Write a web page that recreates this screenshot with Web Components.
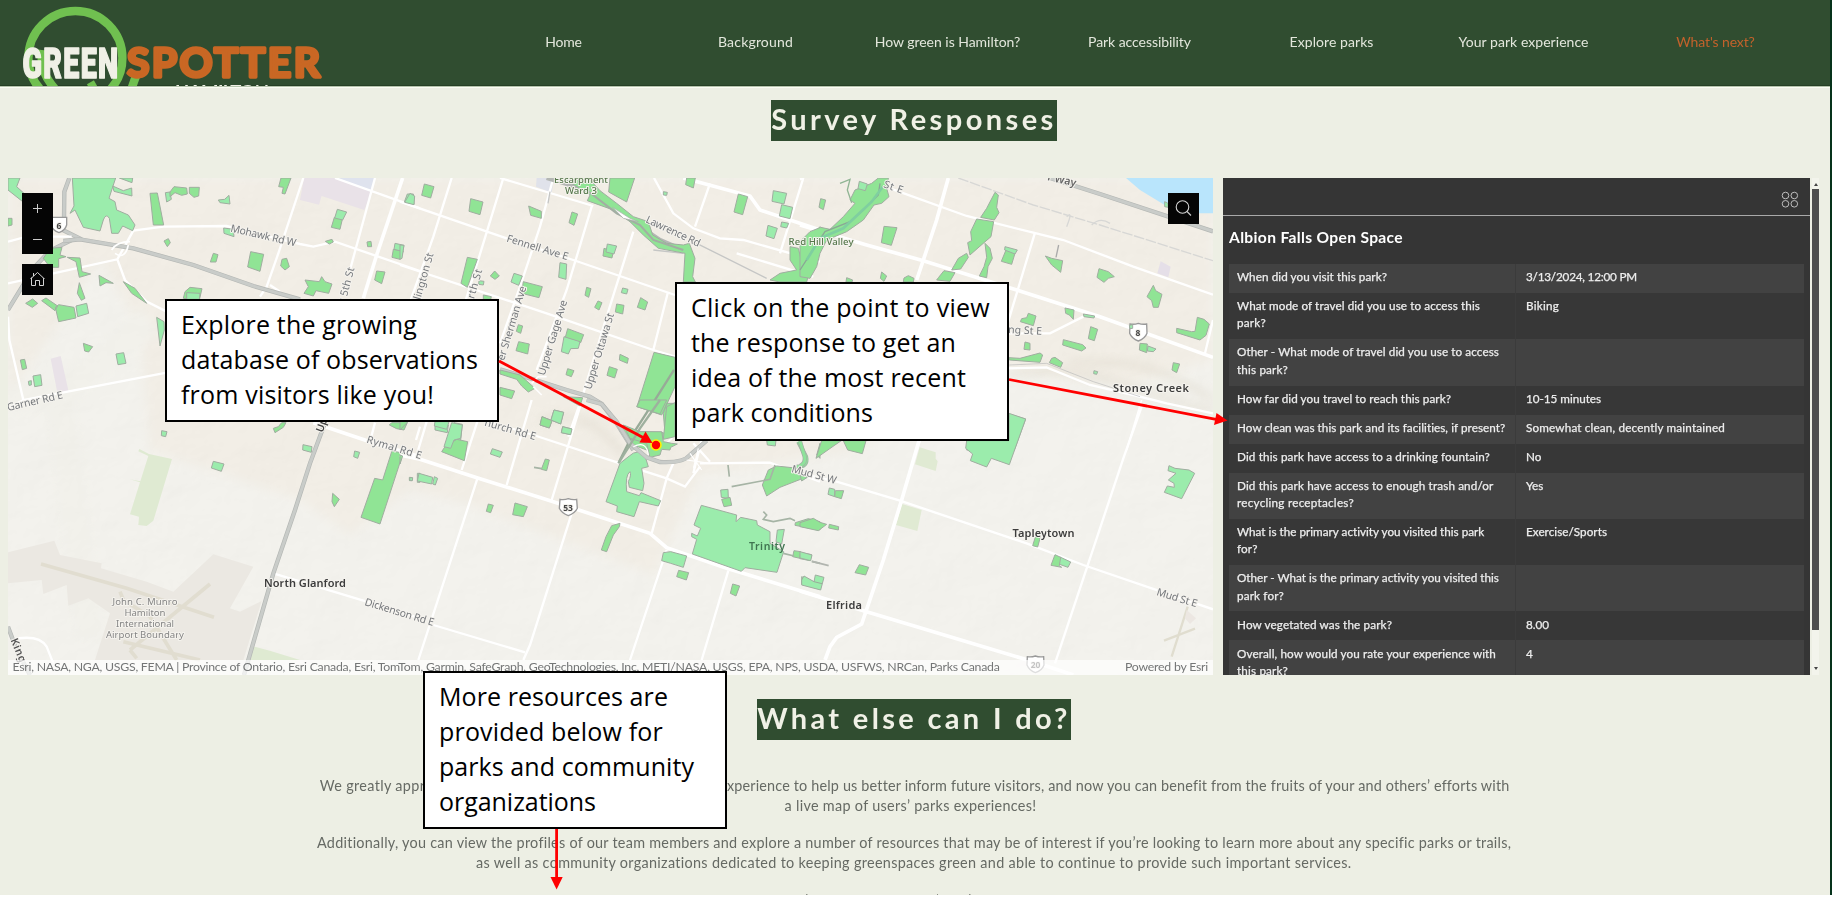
<!DOCTYPE html>
<html lang="en">
<head>
<meta charset="utf-8">
<title>Green Spotter Hamilton</title>
<style>
html,body{margin:0;padding:0;background:#fff;overflow:hidden}
body{font-family:Lato,"Open Sans",sans-serif;color:#666a64}
.dash{display:grid;grid-template-columns:1205px 597px 11px;padding:37px 0 0 8px}
.dash park-details{margin-left:10px;width:587px}
.copy{display:flex;flex-direction:column;align-items:center;width:1194px;margin:36px auto 0 317px;font-size:14.4px;line-height:20.2px}
.copy .split{display:flex;justify-content:space-between;width:1188.5px}
.copy .gap{height:17px}
</style>
</head>
<body>
<app-page>
  <site-header></site-header>
  <section-title style="padding-top:14px"><fit-text w="285.5">Survey Responses</fit-text></section-title>
  <div class="dash">
    <park-map></park-map>
    <park-details></park-details>
    <scroll-rail></scroll-rail>
  </div>
  <section-title style="padding-top:23.5px"><fit-text w="313.5">What else can I do?</fit-text></section-title>
  <div class="copy">
    <div class="split"><fit-text w="145">We greatly appreciate</fit-text><fit-text w="228">you taking the time to share your</fit-text><fit-text w="789">experience to help us better inform future visitors, and now you can benefit from the fruits of your and others’ efforts with</fit-text></div>
    <fit-text w="252" style="margin-right:7px">a live map of users’ parks experiences!</fit-text>
    <div class="gap"></div>
    <fit-text w="1194">Additionally, you can view the profiles of our team members and explore a number of resources that may be of interest if you’re looking to learn more about any specific parks or trails,</fit-text>
    <fit-text w="876">as well as community organizations dedicated to keeping greenspaces green and able to continue to provide such important services.</fit-text>
  </div>
  <note-box slot="over" style="left:165px;top:299px;width:334px;height:123px">
    <fit-text w="236">Explore the growing</fit-text><fit-text w="297">database of observations</fit-text><fit-text w="253">from visitors like you!</fit-text>
  </note-box>
  <note-box slot="over" style="left:675px;top:282px;width:334px;height:159px">
    <fit-text w="299">Click on the point to view</fit-text><fit-text w="265">the response to get an</fit-text><fit-text w="275">idea of the most recent</fit-text><fit-text w="182">park conditions</fit-text>
  </note-box>
  <note-box slot="over" style="left:423px;top:670.5px;width:304px;height:158.5px">
    <fit-text w="229">More resources are</fit-text><fit-text w="224">provided below for</fit-text><fit-text w="255">parks and community</fit-text><fit-text w="157">organizations</fit-text>
  </note-box>
  <note-arrows slot="over"></note-arrows>
</app-page>

<script>
const define = (name, html, init) => customElements.define(name, class extends HTMLElement {
  constructor(){ super(); this.attachShadow({mode:'open'}).innerHTML = html; }
  connectedCallback(){ if (init) init(this); }
});

define('app-page', `<style>
:host{display:block;position:relative;box-sizing:border-box;width:1832px;height:895px;overflow:hidden;background:#edefe4;border-right:2px solid #06331b}
</style><slot></slot><slot name="over"></slot>`);

define('section-title', `<style>
:host{display:flex;justify-content:center;width:1828px;box-sizing:content-box}
h2{margin:0;background:#304d30;color:#f0f1e6;font:bold 29px/37px Lato,sans-serif;height:41px}
</style><h2><slot></slot></h2>`);

define('site-header', `<style>
:host{display:flex;height:87px;margin-bottom:-1px;background:#304d30;overflow:hidden;border-bottom:1px solid #b5c4ac;box-shadow:0 1px 0 #fbfcf4,inset 0 -1px #263f25;box-sizing:border-box}
svg{flex:0 0 468px;height:86px}
nav{display:grid;grid-template-columns:repeat(7,192px);height:86px}
nav a{display:flex;justify-content:center;padding:32px 1px 0 0;font-size:14px;line-height:20px;color:#e3e7dc}
nav a.on{color:#c3622b}
</style>
<svg width="468" height="86" viewBox="0 0 468 86">
  <g fill="none" stroke="#70c050" stroke-width="8.4">
    <circle cx="75.4" cy="58" r="47"/>
    <path d="M42 50C40 68 46 79 56 90"/><path d="M136 76L131 90"/><path d="M89 88L96 84"/>
  </g>
  <text x="22.5" y="77.6" textLength="97" lengthAdjust="spacingAndGlyphs" font-family="Roboto,sans-serif" font-weight="900" font-size="42" letter-spacing="2" fill="#f0f0e6" stroke="#f0f0e6" stroke-width="1.6" stroke-linejoin="round">GREEN</text>
  <text x="127" y="77.3" textLength="193" lengthAdjust="spacing" font-family="Lato,sans-serif" font-weight="700" font-size="41" fill="#c96724" stroke="#c96724" stroke-width="3.4" stroke-linejoin="round">SPOTTER</text>
  <text x="175" y="98.5" textLength="94" font-family="Lato,sans-serif" font-weight="700" font-size="18.5" fill="#f0f0e6">HAMILTON</text>
</svg>
<nav><a><fit-text w="36.5">Home</fit-text></a><a><fit-text w="75">Background</fit-text></a><a><fit-text w="145.5">How green is Hamilton?</fit-text></a><a><fit-text w="103">Park accessibility</fit-text></a><a><fit-text w="84">Explore parks</fit-text></a><a><fit-text w="130">Your park experience</fit-text></a><a class="on"><fit-text w="78.5">What's next?</fit-text></a></nav>`);

define('scroll-rail', `<style>
:host{display:flex;flex-direction:column;align-items:center;width:7px;height:497px;margin-left:2px;background:#f3f4ec}
.u,.d{border:2.5px solid transparent}
.u{border-bottom:3px solid #444;border-top:0;margin:5px 0 3px}
.t{width:7px;height:441px;background:#4e4e4e}
.d{border-top:3px solid #444;border-bottom:0;margin-top:37px}
</style><div class="u"></div><div class="t"></div><div class="d"></div>`);

const ROWS = [
  [[['When did you visit this park?',150]],['3/13/2024, 12:00 PM',111]],
  [[['What mode of travel did you use to access this',243],['park?',29]],['Biking',33]],
  [[['Other - What mode of travel did you use to access',262],['this park?',51]],null],
  [[['How far did you travel to reach this park?',214]],['10-15 minutes',75]],
  [[['How clean was this park and its facilities, if present?',268.5]],['Somewhat clean, decently maintained',199]],
  [[['Did this park have access to a drinking fountain?',253]],['No',15.5]],
  [[['Did this park have access to enough trash and/or',256.5],['recycling receptacles?',117]],['Yes',17.5]],
  [[['What is the primary activity you visited this park',247.5],['for?',20.5]],['Exercise/Sports',81]],
  [[['Other - What is the primary activity you visited this',262],['park for?',47]],null],
  [[['How vegetated was the park?',155]],['8.00',23]],
  [[['Overall, how would you rate your experience with',259],['this park?',51]],['4',7]],
];
const fit = ([t,w]) => `<fit-text w="${w}">${t}</fit-text>`;

define('park-details', `<style>
:host{display:block;height:497px;background:#353535;overflow:hidden;color:#eee}
header{height:38px;box-sizing:border-box;border-bottom:1px solid #a9a9a9;display:flex;justify-content:flex-end;align-items:flex-start;padding:13px 11px 0 0}
h3{margin:0 0 0 6px;padding-top:10px;height:38px;font:bold 15.6px/22px Lato,sans-serif;color:#fff}
.table{margin:0 6.5px 0 6px;font-size:11.7px;line-height:17.3px;-webkit-text-stroke:.25px #eee}
.row{display:grid;grid-template-columns:286px 1fr;background:#373737}
.row:nth-child(odd){background:#424242}
.row>div{padding:4.2px 8px 7.5px}
.row>div+div{padding-left:10px;border-left:1px solid #3b3b3b}
fit-text{display:block}
</style>
<header><svg width="18" height="18" viewBox="0 0 18 18" fill="none" stroke="#bdbdbd" stroke-width="1"><circle cx="4.5" cy="4.5" r="3.3"/><circle cx="13.3" cy="4.5" r="3.3"/><circle cx="4.5" cy="12.8" r="3.3"/><circle cx="13.3" cy="12.8" r="3.3"/></svg></header>
<h3><fit-text w="174">Albion Falls Open Space</fit-text></h3>
<div class="table">${ROWS.map(([q,a]) => `<div class="row"><div>${q.map(fit).join('')}</div><div>${a?fit(a):''}</div></div>`).join('')}</div>`);

define('note-box', `<style>
:host{position:absolute;box-sizing:border-box;display:flex;flex-direction:column;border:2px solid #000;background:#fff;color:#000;font:25px/35px "Open Sans",sans-serif;padding:6px 0 0 14px;z-index:2}
</style><slot></slot>`);

define('note-arrows', `<style>:host{position:absolute;inset:0;z-index:3;pointer-events:none}svg{display:block}</style>
<svg width="1830" height="895" viewBox="0 0 1830 895" fill="red" stroke="none">
<circle cx="656" cy="445" r="5" stroke="#fff200" stroke-width="1.6"/>
<g stroke="red" stroke-width="2.8"><path d="M499 361L643 437.5"/><path d="M1009 379.5L1216 419.3"/><path d="M556.6 829V879"/></g>
<path d="M652.5 443L639.5 442.5L645.5 431.5Z"/><path d="M1227.5 420.5L1214 425L1216.5 413Z"/><path d="M556.6 889.5L550.5 877H562.7Z"/>
<path d="M806 894.5h1.5M937 894.5h1M969 894.5h1.5" stroke="#8b8f86"/>
</svg>`);

/* Six map tiles; tile geometry is in thirds of a pixel. */
define('park-map', `<style>
:host{display:block;position:relative;width:1205px;height:497px;overflow:hidden}
svg{display:block}
.bar{position:absolute;left:0;right:0;bottom:0;height:15px;background:rgba(255,255,255,.68);display:flex;justify-content:space-between;padding:0 5px 0 4.5px;font-size:12.3px;line-height:13.6px;color:#747676}
.btn{position:absolute;background:#050505;width:31px;color:#ccc}
.a{fill:#90e495}.b{fill:#9becac}.a,.b{stroke:#a0ada0;stroke-width:3}
.r{fill:none;stroke:#fff;stroke-width:7}.rw{stroke-width:11}.rn{stroke-width:5}
.hc{fill:none;stroke:#b4b7b4;stroke-width:13}.h{fill:none;stroke:#c9ccc9;stroke-width:9}
text{font-family:"Noto Sans",sans-serif;paint-order:stroke;stroke:#f5f3ee;stroke-width:2px;stroke-linejoin:round}
.st{font-size:10.5px;fill:#75787c}.pl{font-size:11px;font-weight:600;fill:#3d3d3d}.gr{font-size:9.6px;font-weight:500;fill:#55774b;stroke:none}.ap{font-size:9.6px;fill:#858585;text-anchor:middle}
</style>
<svg width="1205" height="497" viewBox="8 178 1205 497">
<defs><filter id="soft" x="-10%" y="-10%" width="120%" height="120%"><feGaussianBlur stdDeviation="5"/></filter>
<filter id="relief" x="0" y="0" width="100%" height="100%"><feTurbulence type="fractalNoise" baseFrequency=".018 .022" numOctaves="4" seed="8"/><feDiffuseLighting surfaceScale="5" lighting-color="#fff"><feDistantLight azimuth="225" elevation="60"/></feDiffuseLighting></filter></defs>
<rect x="8" y="178" width="1205" height="497" fill="#f3f2ed"/>
<path filter="url(#soft)" fill="#f2eee6" d="M8 178H1213V360L1130 385L1000 368L900 400L860 450L700 475L655 575L560 540L470 505L410 490L350 535L300 500L150 450L140 330L100 260L8 400Z"/>
<path d="M8 400L60 395L150 320M60 395L90 640" stroke="#f2f1eb" stroke-width="30" fill="none" filter="url(#soft)"/>
<rect x="8" y="178" width="1205" height="497" filter="url(#relief)" opacity=".07" style="mix-blend-mode:multiply"/>
<path d="M1213 400C1140 350 1090 365 1070 362M1010 375C1100 360 1150 400 1213 410M540 420C590 410 600 430 625 455" stroke="#dcd6c8" stroke-width="5" fill="none" opacity=".6" filter="url(#soft)"/>

<g transform="translate(0 170) scale(.33333)">
<path fill="#e9e2e8" d="M912 24H1040L1120 55L1093 120L965 78L957 104L900 90ZM152 566L182 558L206 665L172 668Z"/><path fill="#dfe3ee" d="M1005 24H1125L1115 66Z"/>
<path class="hc" d="M208 24L193 65L192 150L188 180L245 208M24 420L100 295L150 242L215 210"/><path class="h" d="M208 24L193 65L192 150L188 180L245 208M24 420L100 295L150 242L215 210"/>
<path class="r" d="M24 215L80 200H215M24 340L160 310L352 268L400 182L490 170L680 168L900 222L940 230L1005 215L1260 303M352 268L375 330L440 395L500 425M24 440L28 510L70 690M24 715L70 690L500 608"/>
<path class="r rw" d="M1208 24L1130 255L1090 385"/><path class="r" d="M910 24L835 250L800 350L780 380M1125 24L1050 300M1005 24L1260 115M810 345L840 365"/>
<path class="hc" d="M190 213L240 208L400 235L580 285L760 348L900 388"/><path class="h" d="M190 213L240 208L400 235L580 285L760 348L900 388"/>
<path class="rn r" d="M335 240Q350 215 390 215M345 250Q375 270 385 225"/>
<path class="b" d="M217 24H347L327 85L345 95L350 120L385 135L405 165L398 182L368 168L355 190H335L328 145Q318 128 310 150L300 183L250 172L225 120L210 130L222 108Z"/>
<path class="b" d="M24 24H60L50 50L72 70V98L24 60ZM338 48L370 62L395 54L396 78L342 64ZM358 24H398L396 38ZM496 68L510 66L514 88L500 96ZM655 90L674 88L687 76L690 102L660 98ZM671 174L700 178L702 200L672 190Z"/>
<path class="a" d="M510 66L522 50L560 54L562 72L545 76L525 68L510 80ZM568 52L598 52L596 78L582 82L568 70ZM450 70L472 69L491 165H460ZM843 24H873L855 72L846 70L850 52L836 50ZM24 145H36V165L24 168Z"/>
<path class="a" d="M150 235L186 232L180 255L198 260L176 266V292H150L130 265ZM202 262L240 264L246 305L272 312L238 322L228 275ZM492 213L505 206L511 218L502 230ZM640 250L654 254L648 276L631 276ZM752 245L791 253L780 304L743 291ZM846 268L860 265L868 290L855 300L842 288Z"/>
<path class="a" d="M238 338L255 385L244 391L232 370ZM370 335L405 355L440 400L395 370ZM297 316L340 340L318 338L300 348ZM77 400L98 387L113 400L97 412ZM125 392L138 384L173 408L165 422ZM166 412L176 404L222 412L228 444L176 455ZM550 385L555 365L570 352L606 356L598 390Z"/>
<path class="b" d="M228 408L260 400L266 430L233 440ZM560 368L600 370L598 388H560ZM348 552L371 548L378 580L354 584ZM99 618L122 614L126 646L104 650ZM85 634L94 632V645L87 646ZM470 442L492 455L493 480L480 528Z"/>
<path class="a" d="M250 520L278 530L266 546L254 543ZM61 570L74 568L80 595L67 599ZM915 330L958 335L965 320L975 335L996 342L986 370L948 362L940 378L912 370L925 350ZM1003 142L1027 148L1020 178L994 172ZM976 214L996 208L1000 216L988 222ZM1101 216L1113 214L1115 230L1103 230ZM1130 303L1155 306L1145 341L1124 330ZM1180 238L1210 243L1200 268L1176 262Z"/>
<path class="b" d="M1012 118L1040 126L1028 150L1004 144ZM1185 220L1212 226L1208 244L1182 238ZM1222 72L1240 72L1242 103L1213 96Z"/>
</g>

<g transform="translate(400 170) scale(.33333)">
<path fill="#e0e2ea" d="M410 24H462L455 68L408 50Z"/>
<path class="r" d="M0 95L320 205L520 270L825 375M0 285L440 430L760 540L825 560M155 24L100 200L0 480M310 24L210 350L150 540M460 24L420 170L360 350L300 520M575 110L500 360L410 600M700 185L620 440L550 670L505 800M803 370L760 540M300 24L580 108M762 24L820 130L880 175L960 205L1030 210L1260 275M930 40L885 170M1010 250L1240 320M1210 24L1140 250"/>
<path class="r rw" d="M850 24L1050 78L1080 120L1260 180"/>
<path class="hc" d="M440 24L560 60L640 110L720 170L780 210L850 240"/><path d="M890 220L1100 325M760 240L850 250M450 65L444 100" stroke="#c5c6c5" stroke-width="4" fill="none"/>
<path class="a" d="M490 24H565L600 62L650 100L700 140L745 155L758 195L800 220L850 225L868 220L885 265L878 320L886 336H850L855 250L775 235L730 195L690 155L640 120L562 92L570 75Z"/><path d="M560 60L650 130L720 165L760 210L850 240" stroke="#a3ada3" stroke-width="6" fill="none"/>
<path fill="#fff" stroke="#aaa" stroke-width="2" d="M638 112L690 145L715 155L670 145Z"/>
<path class="a" d="M630 24H704L680 96L626 66ZM73 42L102 50L92 84L65 76ZM212 86L249 96L240 134L207 124ZM386 108L424 124V145L392 136ZM516 126L533 132L522 166L507 158ZM860 24H886L880 54L857 44ZM1015 72L1043 80L1028 134L1002 126ZM612 235L640 244L636 264L609 258ZM202 262L232 268L202 352L183 340ZM284 303L298 318L285 328L271 318ZM370 335L427 350L417 383L365 370ZM560 352L573 356L566 382L555 376ZM594 393L606 398L597 420L584 412Z"/>
<path class="b" d="M30 70L44 78L42 104L14 97ZM622 222L650 228L642 252L618 246ZM342 310L367 318L356 346L333 336ZM480 278L500 282L498 328L476 322ZM1120 62L1160 70L1152 102L1116 94ZM1145 104L1178 112L1170 146L1138 138ZM1104 166L1132 175L1122 206L1098 198ZM1145 156L1166 160L1160 174L1142 170ZM0 225L12 226L6 265L0 268ZM668 354L684 358L680 372L664 368ZM237 332L252 334L250 345L236 343ZM790 65L802 67L800 76L790 75Z"/>
<path class="a" d="M650 402L672 406L668 432L646 426ZM722 383L743 396L735 420L712 412ZM355 464L368 468L362 490L349 484ZM356 515L388 522L383 552L348 542ZM503 476L551 494L542 518L496 502ZM503 596L522 602L514 620L498 614ZM628 590L652 598L644 624L621 616ZM762 547L825 562V650L785 735L711 710ZM250 375L274 380L272 388H250ZM660 553L685 565L682 580L658 570ZM300 652L344 663L335 686L300 675ZM490 680L548 683L540 708ZM426 740L456 752L448 774L420 765ZM800 700H825V800L795 790L790 730Z"/>
<path class="b" d="M492 500L540 515L535 535L512 536L505 552L484 545ZM462 720L491 727L482 762L453 750ZM488 770L516 777L512 794L484 788ZM105 760L145 765L142 788L105 780ZM162 758L187 763L182 810L190 840H135Z"/>
<path class="a" d="M660 765L720 785L790 788L785 830L760 840H740L700 825Z"/>
<path class="hc" d="M300 598L400 628L500 660L570 680L605 702L650 760L700 840"/><path class="h" d="M300 598L400 628L500 660L570 680L605 702L650 760L700 840"/>
<path class="a" d="M300 600L360 615L405 655L385 666L365 648L350 628L300 612Z"/>
<path d="M822 600L765 690L700 790L655 880" stroke="#98aa98" stroke-width="7" fill="none"/>
<path class="a" d="M1170 230L1195 235L1205 275L1235 250V200L1260 170V240L1235 280L1220 336H1140L1110 330L1140 310L1190 300L1170 270Z"/>
<path class="rn r" d="M395 640L415 620L440 620M400 650L425 675M780 840L830 790"/>
</g>

<g transform="translate(800 170) scale(.33333)">
<path fill="#b9e5fc" d="M978 24H1239V130H1170L1110 115L1020 60Z"/><path fill="#e5dfe8" d="M1082 274L1112 290L1105 322L1072 310Z"/>
<path class="r rw" d="M445 24L410 150L350 330M0 165L200 225L370 272L650 360L900 440L1239 562"/><path class="r" d="M0 28L10 24M270 55L500 138L700 188L790 210L1000 290L1239 374M705 188L620 470M850 440L750 490H620M1239 450L1215 550"/>
<path class="r" d="M620 595L740 592L870 645L1000 675L1100 700L1239 730"/><path d="M628 585L740 580L880 635L1020 680" stroke="#bbb" stroke-width="2" fill="none"/>
<path d="M475 24L700 105L900 165L1239 272" stroke="#d7d7d5" stroke-width="4" stroke-dasharray="32 5" fill="none"/><path d="M800 140Q820 120 800 170M875 165Q900 140 930 160" stroke="#d7d7d5" stroke-width="4" fill="none"/>
<path class="hc" d="M750 24L900 72L1239 184"/><path class="h" d="M750 24L900 72L1239 184"/>
<path class="a" d="M235 24H265L260 55L267 80L245 100L222 105L190 150L140 185L80 210L60 250L50 290L30 325L0 320V215L30 185L62 172L90 178L130 140L165 100L150 90L165 60L190 50L215 40Z"/>
<path d="M240 40L235 75L190 120L150 155L75 185L45 230L0 300" stroke="#8ba696" stroke-width="4" fill="none"/><path d="M248 50L215 95L130 175L60 205L20 270" stroke="#7fcfa0" stroke-width="8" fill="none"/><path d="M120 40L150 28L142 60L155 98" stroke="#91b594" stroke-width="4" fill="none"/>
<path class="b" d="M178 34L202 42L196 62L174 56Z"/>
<path class="a" d="M62 86L77 90L70 119L57 112ZM252 169L291 173L274 226L244 218ZM585 67L595 75L590 112L597 128L583 150L542 142L560 115ZM530 147L581 155L573 200L552 218L510 255L503 218L515 212L512 185ZM555 220L570 235L577 265L564 290L560 323L538 318L552 290L560 262ZM500 250L505 262L482 297L455 300L475 265ZM416 322L432 302L465 308L450 334L410 330ZM618 240L645 250L635 283L604 274ZM245 306L260 318L252 334L241 325ZM140 323L158 330L156 336H138ZM312 324L325 317L342 325L340 336H310Z"/>
<path class="a" d="M736 258L755 265L788 272L782 307L755 285ZM897 296L925 305L943 320L925 325L912 337L891 322ZM1060 346L1067 362L1086 373L1075 412H1060L1055 392L1041 380ZM1130 475L1175 485L1185 484L1192 442L1212 448L1228 462L1218 496L1200 510L1130 488ZM685 430L708 438L700 467L661 455L665 446L680 443ZM872 470L893 478L883 512L865 506ZM790 509L848 524L858 534L845 543L788 525ZM627 563L660 565L720 549L728 555L720 577L628 570ZM675 516L690 520V540L672 538ZM755 565L765 562L788 578L782 592L748 578ZM1020 520L1042 522L1040 548L1018 540ZM1120 578L1139 582L1130 608L1116 600ZM795 414L822 420L820 448L808 435L797 430Z"/>
<path class="b" d="M615 230L652 240L645 252L614 240ZM1044 528L1068 537L1060 545L1042 543ZM850 432L884 438L882 444L852 440ZM882 602L893 605L890 613L881 611ZM630 733L677 747L643 840H500L510 812H627ZM1094 95L1104 100V112L1094 110Z"/>
<path d="M776 225L768 262" stroke="#aaa" stroke-width="4"/>
<path class="r rn" d="M1025 690L980 840M360 813L352 840"/>
<path fill="#fff" stroke="#999" stroke-width="4" d="M990 462Q1003 464 1015 460Q1027 464 1040 462L1041 490Q1035 506 1015 513Q995 506 989 490Z"/><path class="b" d="M988 466L998 464L998 475L990 476Z"/>
</g>

<g transform="translate(0 420) scale(.33333)">
<path fill="#ebe8e2" d="M24 397L163 362L180 405L305 430L303 445L440 485L520 515L640 403L760 440L690 565L720 575L785 543L730 720H285L330 580L265 535L205 557L200 495L130 522L125 480L24 490Z"/>
<path d="M123 432L380 505L642 592M390 690L630 492M390 690L410 715M360 515L370 540L450 590L530 720M370 665L600 720" stroke="#e1ddd0" stroke-width="11" fill="none"/>
<path fill="#dfead2" d="M418 87L447 102L516 117L460 302L440 318L415 315L417 290L390 283L420 187L390 178L421 184L445 108L415 94ZM755 678L812 693L900 720H745Z"/>
<path class="r rw" d="M940 8L1110 65L1260 110"/><path class="r" d="M1125 8L1110 65M820 460L1100 545L1260 595M30 660Q115 640 140 680L160 730M1260 20L1248 60"/>
<path class="hc" d="M975 8L930 130L885 270L820 460L732 765M24 620L50 690L90 765"/><path class="h" d="M975 8L930 130L885 270L820 460L732 765M24 620L50 690L90 765"/>
<path class="a" d="M820 25L835 20L845 8H858L850 22L825 38ZM1176 92L1209 100L1140 312L1083 292L1124 175L1148 180ZM998 220L1018 238L1003 260L996 245ZM1175 8H1222L1212 30L1190 26L1168 15Z"/><path class="b" d="M485 32L501 35L497 50L484 47ZM640 124L672 132L664 154L634 144ZM909 74L936 80L934 97L908 90ZM1064 93L1079 97L1073 115L1061 110ZM1228 172L1238 173L1236 182L1228 181ZM1252 160H1260V187H1252Z"/>
</g>

<g transform="translate(400 400) scale(.33333)">
<path class="r rw" d="M0 165L60 178L240 236L460 305L750 400L800 443L980 505L1260 590"/><path class="r" d="M395 0L320 255M80 65L50 165M232 65L185 210M540 20L455 300M232 236L55 780M515 340L390 735L370 780M800 450L690 780M985 512L905 780M250 60L400 105L660 190L800 235L855 260L900 200M800 235L755 400M820 190L800 235M100 675L375 757M900 190L1110 188L1260 245M880 130L930 185M905 120L880 220"/>
<path class="a" d="M125 155L135 140L170 118L203 125L193 182ZM426 50L456 62L448 84L420 75ZM345 309L382 320L370 350L338 344ZM265 312L280 316L272 338L259 334ZM436 177L448 180L440 212L424 208ZM635 377L660 370L658 380L640 405L620 455L604 450L618 410ZM836 511L866 518L859 540L830 530ZM998 552L1019 558L1008 588L991 580ZM0 65H24L0 90ZM0 165L8 168L0 192ZM710 20L720 0H800L780 42ZM1105 210L1130 198L1195 205L1222 230L1140 262L1100 288L1087 255Z"/>
<path class="b" d="M155 68L187 75L182 115L162 120L152 145L132 140ZM105 65H147L140 88L103 78ZM462 30L491 37L482 72L453 60ZM488 80L516 87L512 104L484 98ZM277 146L307 156L300 172L271 162ZM57 220L98 232L95 252L52 243ZM103 230L113 235L106 255L98 252ZM30 232L38 234L37 242H29Z"/>
<path class="b" d="M688 168Q712 145 735 168L745 200L725 205L732 250L728 272L688 262L685 245Q695 225 690 215Q675 225 680 275L718 287L723 278L782 302L775 318L718 305L702 350L650 335L652 318L618 305L660 190Z"/>
<path class="b" d="M904 316L1010 345L1008 365L1022 352L1070 362L1072 375L1110 395V430L1151 455L1131 517L1035 503L1024 514L877 462L890 418L875 410V400L892 408L902 385L882 375ZM790 458L812 455L860 468L850 502L812 490L785 482ZM962 270L984 268L985 295L964 292ZM1132 390L1153 388L1145 432L1128 425Z"/>
<path class="a" d="M965 298L990 292L995 316L972 320ZM1186 368L1225 356L1260 365V390L1185 376ZM1182 452L1202 455L1200 475L1178 470Z"/><path class="b" d="M1205 458L1235 464L1230 482L1200 476ZM1205 530L1240 545L1260 530V568L1205 552ZM1100 120H1128L1126 138L1102 135Z"/>
<path d="M1090 335L1100 345L1090 358L1120 365L1170 355L1185 362M1150 460L1182 468M1235 484L1260 490M995 260L1110 238L1125 195M984 195L988 230M402 202L425 206" stroke="#a6b4a5" stroke-width="5" fill="none"/>
<path d="M1195 125L1218 170Q1225 200 1190 200" stroke="#a4aea4" stroke-width="13" fill="none"/><path d="M1195 125L1218 170Q1225 200 1190 200" stroke="#8ee39b" stroke-width="9" fill="none"/><path class="a" d="M1250 165L1260 130V175Z"/>
<path class="a" d="M670 75L720 95L785 95L790 125L815 130L832 132L812 142L810 150L785 148L780 165L750 172L740 130L690 115ZM800 20L825 8V110L790 118Z"/>
<path class="hc" d="M560 0L605 12L650 65L690 130L740 172L780 186Q850 190 870 165L920 122"/><path class="h" d="M560 0L605 12L650 65L690 130L740 172L780 186Q850 190 870 165L920 122"/>
<path d="M780 0L720 85L690 135L655 190" stroke="#9eb09e" stroke-width="7" fill="none"/>
<path d="M860 180L930 190M870 160L905 210M895 145L880 205M700 140Q740 120 745 165" stroke="#fff" stroke-width="3.5" fill="none"/>
<path fill="#fff" stroke="#999" stroke-width="4" d="M480 298Q493 300 505 296Q517 300 530 298L532 325Q525 340 505 347Q485 340 478 325Z"/>
</g>

<g transform="translate(800 400) scale(.33333)">
<path fill="#e0ead3" d="M359 142L407 157V176L413 184L407 213L345 193ZM306 312L365 330L352 393L288 375Z"/>
<path class="r rw" d="M357 122L305 300L250 480L185 672L110 712L90 740L75 780M0 573L200 635L700 785L820 825"/><path class="r" d="M0 220L110 245L300 302L680 430L850 495L1239 628M1025 20L970 175L765 790"/>
<path class="b" d="M627 40L677 57L628 194L574 175L560 201L511 182L518 162L497 145L500 122H627ZM1107 197L1125 205L1167 210L1184 220L1145 296L1093 277L1102 258L1123 262L1122 250L1105 240L1128 220L1104 212ZM780 471L812 486L804 502L776 492ZM88 264L104 268V290L84 283ZM5 540L12 528L42 545L46 525L72 532L62 570L5 555ZM0 455L36 465L32 482L0 474Z"/>
<path class="a" d="M65 122H124L105 135L48 175ZM130 122H198L187 161L143 150ZM708 405L722 408L713 441L698 437ZM765 464L782 472L778 497L785 502L753 496ZM106 272L131 272L124 296L104 290ZM0 368L40 355L60 367L80 373L55 392L0 380ZM88 373L116 380L115 390L86 384ZM178 494L206 502L197 525L165 518ZM0 225L22 232L5 243Z"/>
<path d="M0 125L14 170Q18 190 0 198" stroke="#a4aea4" stroke-width="13" fill="none"/><path d="M0 125L14 170Q18 190 0 198" stroke="#8ee39b" stroke-width="9" fill="none"/><path d="M36 484L86 497" stroke="#b1b5af" stroke-width="5"/><path d="M42 545L66 551" stroke="#9aaa9a" stroke-width="3"/>
<path d="M1163 620L1115 770M1092 722L1185 686" stroke="#e0ddcf" stroke-width="7"/><path fill="#ece7e2" d="M1160 630L1188 655L1170 672L1155 655Z"/>
<path fill="#fff" stroke="#999" stroke-width="4" d="M682 770Q694 772 706 768Q718 772 731 770L732 795Q726 812 706 818Q688 812 681 795Z"/>
</g>

<g transform="translate(0 420) scale(.33333)"><path fill="#fff" stroke="#999" stroke-width="4" d="M153 -608H200V-585Q195 -568 177 -562Q158 -568 153 -585Z"/></g>
<g style="font-size:8.5px" fill="#444" font-weight="700" text-anchor="middle"><text x="59" y="228.5" stroke="none">6</text><text x="1138" y="335.5" stroke="none">8</text><text x="568" y="510.5" stroke="none">53</text><text x="1035.5" y="668" stroke="none">20</text></g>

<g class="st">
<text transform="translate(230 231.5) rotate(13)" textLength="67">Mohawk Rd W</text>
<text transform="translate(506 241.5) rotate(17)" textLength="64">Fennell Ave E</text>
<text transform="translate(645 222) rotate(25)" textLength="59">Lawrence Rd</text>
<text transform="translate(883 187) rotate(20)" textLength="20">St E</text>
<text transform="translate(345 304) rotate(-75)" textLength="37">r 5th St</text>
<text transform="translate(419.5 303) rotate(-74)" textLength="51">llington St</text>
<text transform="translate(472 306) rotate(-74)" textLength="37">orth St</text>
<text transform="translate(504 361) rotate(-73)" textLength="77">er Sherman Ave</text>
<text transform="translate(544.5 376) rotate(-73)" textLength="78">Upper Gage Ave</text>
<text transform="translate(591 390) rotate(-73)" textLength="79">Upper Ottawa St</text>
<text transform="translate(8 411) rotate(-13)" textLength="57">Garner Rd E</text>
<text transform="translate(366 442.5) rotate(17)" textLength="57">Rymal Rd E</text>
<text transform="translate(484 425.5) rotate(16)" textLength="53">hurch Rd E</text>
<text transform="translate(1008 333) rotate(3)" textLength="34">ng St E</text>
<text transform="translate(791 472) rotate(15)" textLength="46">Mud St W</text>
<text transform="translate(1156 595) rotate(17)" textLength="42">Mud St E</text>
<text transform="translate(364 605) rotate(17)" textLength="72">Dickenson Rd E</text>
<text transform="translate(10.5 640) rotate(68)" fill="#555" font-weight="600" textLength="25">King</text>
<text transform="translate(322.5 433) rotate(-70)" fill="#444" font-weight="600">Up</text>
<text transform="translate(1047 180) rotate(13)" font-weight="600" fill="#666" textLength="29">r Way</text>
</g>
<g class="pl"><text x="264" y="586.5" textLength="82">North Glanford</text><text x="1113" y="392" textLength="76">Stoney Creek</text><text x="1012.5" y="537" textLength="62">Tapleytown</text><text x="826" y="608.5" textLength="36">Elfrida</text></g>
<text x="749" y="550" textLength="36" style="font-size:10.5px;font-weight:600;fill:#3f7450;stroke:none">Trinity</text>
<g class="gr"><text x="554" y="182.5" textLength="54">Escarpment</text><text x="565" y="193.5" textLength="32">Ward 3</text><text x="788.5" y="245" textLength="65">Red Hill Valley</text></g>
<g class="ap"><text x="145" y="605" textLength="65">John C. Munro</text><text x="145" y="616" textLength="41">Hamilton</text><text x="145" y="627" textLength="58">International</text><text x="145" y="638" textLength="78">Airport Boundary</text></g>
</svg>
<div class="bar"><fit-text w="987">Esri, NASA, NGA, USGS, FEMA | Province of Ontario, Esri Canada, Esri, TomTom, Garmin, SafeGraph, GeoTechnologies, Inc, METI/NASA, USGS, EPA, NPS, USDA, USFWS, NRCan, Parks Canada</fit-text><fit-text w="83">Powered by Esri</fit-text></div>
<div class="btn" style="left:14px;top:15px;height:61px"><svg width="31" height="61" stroke="#ccc" fill="none"><path d="M11 15.5h9M15.5 11v9M11 46.5h9"/></svg></div>
<div class="btn" style="left:14px;top:86px;height:31px"><svg width="31" height="31" stroke="#d4d4d4" fill="none"><path d="M9.5 14L15.5 8.5L21.5 14V21.5H17.5V16.5H13.5V21.5H9.5V13.5M8.5 15L10 13.5M21 13.5L22.5 15M11.5 12V9"/></svg></div>
<div class="btn" style="left:1160px;top:15px;height:31px"><svg width="31" height="31" stroke="#d4d4d4" fill="none" stroke-width="1.1"><circle cx="14.5" cy="14" r="6.3"/><path d="M19 18.5L23 22.5"/></svg></div>`);

/* Tracks its text out, or in, to an exact line width. */
define('fit-text', `<style>:host{display:inline-block;white-space:nowrap}span{display:inline-block;white-space:nowrap}</style><span><slot></slot></span>`, el => {
  const s = el.shadowRoot.querySelector('span'), w = +el.getAttribute('w');
  el.style.width = w + 'px';
  s.style.letterSpacing = '0px';
  s.style.letterSpacing = (w - s.getBoundingClientRect().width) / el.textContent.length + 'px';
});
</script>
</body>
</html>
